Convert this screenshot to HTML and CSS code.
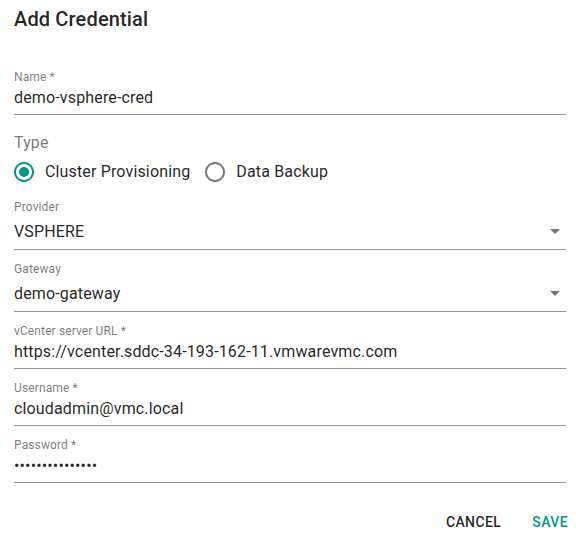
FILE: index.html
```html
<!DOCTYPE html>
<html>
<head>
<meta charset="utf-8">
<link rel="stylesheet" href="styles.css">
</head>
<body>
<div class="dialog">
  <h2 class="title">Add Credential</h2>
  <div class="content">
    <div class="field">
      <div class="label">Name *</div>
      <div class="input">demo-vsphere-cred</div>
    </div>

    <div class="type-group">
      <div class="type-label">Type</div>
      <div class="radios">
        <div class="radio">
          <svg class="radio-icon checked" viewBox="0 0 24 24" width="24" height="24"><path d="M12 2C6.48 2 2 6.48 2 12s4.48 10 10 10 10-4.48 10-10S17.52 2 12 2zm0 18c-4.42 0-8-3.58-8-8s3.58-8 8-8 8 3.58 8 8-3.58 8-8 8z"/><circle cx="12" cy="12" r="5"/></svg>
          <span>Cluster Provisioning</span>
        </div>
        <div class="radio">
          <svg class="radio-icon" viewBox="0 0 24 24" width="24" height="24"><path d="M12 2C6.48 2 2 6.48 2 12s4.48 10 10 10 10-4.480 10-10S17.52 2 12 2zm0 18c-4.42 0-8-3.58-8-8s3.58-8 8-8 8 3.58 8 8-3.58 8-8 8z"/></svg>
          <span>Data Backup</span>
        </div>
      </div>
    </div>

    <div class="field select">
      <div class="label">Provider</div>
      <div class="input"><span>VSPHERE</span><svg class="arrow" viewBox="0 0 24 24" width="24" height="24"><path d="M7 10l5 5 5-5z"/></svg></div>
    </div>

    <div class="field select">
      <div class="label">Gateway</div>
      <div class="input"><span>demo-gateway</span><svg class="arrow" viewBox="0 0 24 24" width="24" height="24"><path d="M7 10l5 5 5-5z"/></svg></div>
    </div>

    <div class="field">
      <div class="label">vCenter server URL *</div>
      <div class="input">https://vcenter.sddc-34-193-162-11.vmwarevmc.com</div>
    </div>

    <div class="field">
      <div class="label">Username *</div>
      <div class="input">cloudadmin@vmc.local</div>
    </div>

    <div class="field">
      <div class="label">Password *</div>
      <div class="input password">•••••••••••••••</div>
    </div>
  </div>
  <div class="actions">
    <button class="btn">Cancel</button>
    <button class="btn primary">Save</button>
  </div>
</div>
</body>
</html>
```

FILE: styles.css
```css
html, body {
  margin: 0;
  padding: 0;
  background: #ffffff;
}

body {
  font-family: Roboto, "Liberation Sans", sans-serif;
  color: rgba(0, 0, 0, 0.87);
}

.dialog {
  padding: 7px 10px 0 14px;
}

.title {
  margin: 0;
  font-size: 20px;
  font-weight: 500;
  line-height: 24px;
  letter-spacing: 0.0075em;
}

.content {
  margin-top: 39px;
}

.field {
  border-bottom: 1px solid rgba(0, 0, 0, 0.42);
  margin-bottom: 12px;
}

.label {
  font-size: 12px;
  line-height: 14px;
  letter-spacing: 0.01em;
  color: rgba(0, 0, 0, 0.54);
}

.input {
  font-size: 16px;
  line-height: 19px;
  letter-spacing: 0.00938em;
  padding: 4px 0 7px;
  white-space: nowrap;
}

.select .input {
  display: flex;
  align-items: center;
  justify-content: space-between;
  padding: 8px 0 8px;
}

.arrow {
  fill: rgba(0, 0, 0, 0.54);
  margin: -3px -1px -2px 0;
  flex: none;
}

.type-group {
  margin-top: 18px;
  margin-bottom: 16px;
}

.type-label {
  font-size: 16px;
  line-height: 19px;
  letter-spacing: 0.00938em;
  color: rgba(0, 0, 0, 0.54);
}

.radios {
  display: flex;
  align-items: center;
  margin-top: 8px;
  margin-left: -2px;
}

.radio {
  display: flex;
  align-items: center;
  gap: 9px;
  font-size: 16px;
  line-height: 24px;
  letter-spacing: 0.00938em;
  margin-right: 13px;
}

.radio-icon {
  fill: rgba(0, 0, 0, 0.54);
  flex: none;
}

.radio-icon.checked {
  fill: #009688;
}

.actions {
  display: flex;
  justify-content: flex-end;
  gap: 15px;
  margin-top: 23px;
  margin-right: -10px;
}

.btn {
  font-family: Roboto, "Liberation Sans", sans-serif;
  font-size: 14px;
  font-weight: 500;
  letter-spacing: 0.02857em;
  text-transform: uppercase;
  line-height: 20px;
  background: none;
  border: 0;
  padding: 6px 8px;
  color: rgba(0, 0, 0, 0.87);
  cursor: pointer;
}

.btn.primary {
  color: #009688;
}
```
